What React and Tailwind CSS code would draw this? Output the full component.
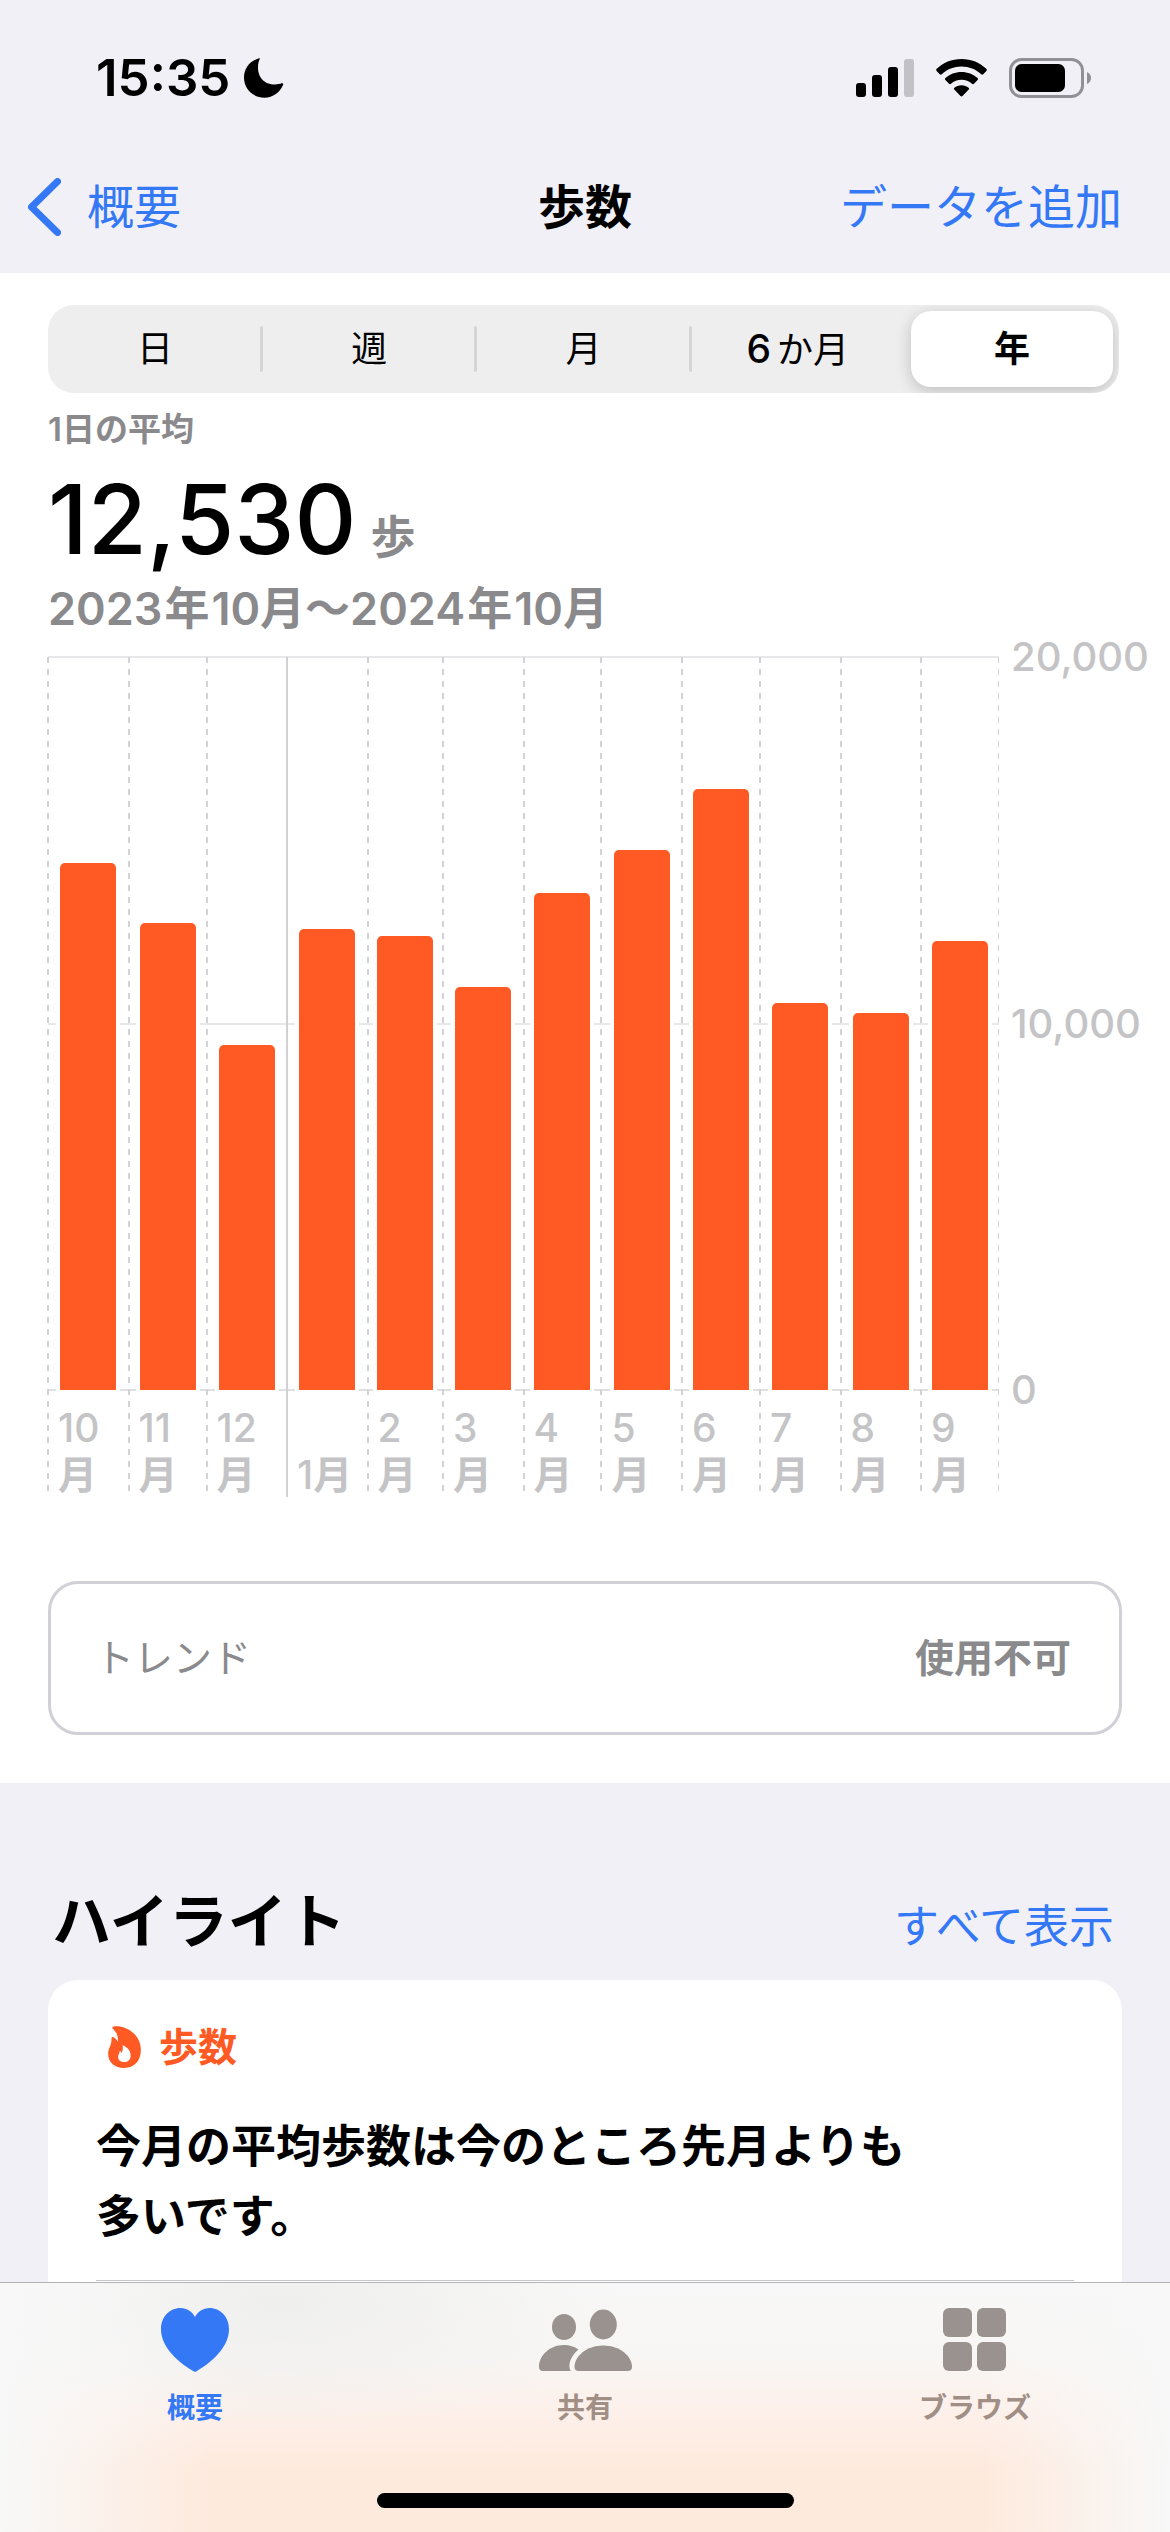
import { useState } from 'react';

const RANGES = ['日', '週', '月', '6か月', '年'];

const MAX_STEPS = 20000;

const MONTHS = [
  { month: 10, days: 31, steps: 14379 },
  { month: 11, days: 30, steps: 12742 },
  { month: 12, days: 31, steps: 9413 },
  { month: 1, days: 31, steps: 12578 },
  { month: 2, days: 29, steps: 12387 },
  { month: 3, days: 31, steps: 10996 },
  { month: 4, days: 30, steps: 13561 },
  { month: 5, days: 31, steps: 14734 },
  { month: 6, days: 30, steps: 16398 },
  { month: 7, days: 31, steps: 10559 },
  { month: 8, days: 31, steps: 10286 },
  { month: 9, days: 30, steps: 12251 },
];

function StatusBar() {
  return (
    <div className="h-[155px] shrink-0 pl-24 pr-[79px] flex items-center justify-between">
      <div className="flex items-center gap-3.5">
        <span className="text-[51px] leading-[56px] font-semibold">15:35</span>
        <svg width="40" height="40" viewBox="0 0 40 40" aria-hidden="true">
          <path d="M15 .3C16 0 16 .8 15.7 1.3C12 8 13 26.5 31 26.5C33.5 26.5 36 26 37.5 25.3C39 24.8 39.6 25.6 39.1 26.8C36 34.5 29 39.7 20.5 39.7C9 39.7 0 30.8 0 19.5C0 10.5 6 2.8 15 .3Z" />
        </svg>
      </div>
      <div className="flex items-center gap-[22px]">
        <svg width="58" height="38" viewBox="0 0 58 38" aria-hidden="true">
          <rect x="0" y="24" width="10" height="14" rx="3" />
          <rect x="16" y="16" width="10" height="22" rx="3" />
          <rect x="32" y="8" width="10" height="30" rx="3" />
          <rect x="48" y="0" width="10" height="38" rx="3" fill="#c2c1c7" />
        </svg>
        <svg width="51" height="38" viewBox="0 0 51 38" aria-hidden="true">
          <path d="M25.500 0C35.300 0 44 3.700 50.300 9.800C51 10.500 51 11.300 50.400 11.900L47.200 15.200C46.600 15.800 45.800 15.800 45.200 15.200C40 10.400 33 7.600 25.500 7.600C18 7.600 11 10.400 5.800 15.200C5.200 15.800 4.400 15.800 3.800 15.200L.6 11.900C0 11.300 0 10.500 .7 9.800C7 3.700 15.700 0 25.500 0Z" />
          <path d="M25.500 13C31.700 13 37.300 15.300 41.500 19.100C42.200 19.800 42.200 20.500 41.600 21.100L38 24.800C37.400 25.400 36.700 25.400 36 24.800C33.200 22.300 29.500 20.800 25.500 20.800C21.500 20.800 17.800 22.300 15 24.800C14.300 25.400 13.600 25.400 13 24.800L9.400 21.100C8.800 20.500 8.800 19.800 9.500 19.100C13.700 15.300 19.300 13 25.500 13Z" />
          <path d="M25.500 26.200C28.300 26.200 30.700 27.100 32.600 28.700C33.300 29.300 33.300 30 32.700 30.600L26.500 37.100C25.900 37.700 25.100 37.700 24.500 37.100L18.300 30.600C17.700 30 17.700 29.300 18.400 28.700C20.300 27.100 22.700 26.200 25.500 26.200Z" />
        </svg>
        <svg width="82" height="40" viewBox="0 0 82 40" aria-hidden="true">
          <rect x="1.500" y="1.500" width="72" height="37" rx="11" fill="none" stroke="#919095" strokeWidth="3" />
          <rect x="6" y="6" width="50" height="28" rx="6.500" />
          <path d="M78 14C80.500 15 82 17 82 20C82 23 80.500 25 78 26Z" fill="#919095" />
        </svg>
      </div>
    </div>
  );
}

function NavBar() {
  return (
    <header className="h-[118px] shrink-0 pb-3.5 px-7 grid grid-cols-[1fr_auto_1fr] items-center text-[47px] leading-[56px]">
      <button type="button" className="flex items-center gap-[26px] text-[#3478f6]">
        <svg width="33" height="58" viewBox="0 0 33 58" fill="none" stroke="currentColor" strokeWidth="7" strokeLinecap="round" strokeLinejoin="round" aria-hidden="true">
          <path d="M29.500 3.500L3.500 29L29.500 54.500" />
        </svg>
        <span>概要</span>
      </button>
      <h1 className="font-bold">歩数</h1>
      <button type="button" className="justify-self-end pr-5 text-[#3478f6]">データを追加</button>
    </header>
  );
}

function RangePicker() {
  const [selected, setSelected] = useState('年');

  return (
    <div className="ml-12 mr-[51px] h-[88px] rounded-[26px] bg-[#eeeeef] grid grid-cols-5 overflow-hidden">
      {RANGES.map((range, i) => {
        const active = range === selected;
        const divider = i > 0 && !active && RANGES[i - 1] !== selected;
        return (
          <div key={range} className="relative p-1.5">
            {divider && <span className="absolute -left-0.5 top-[21px] h-[46px] w-[3px] rounded-full bg-[#d5d5d7]" />}
            <button
              type="button"
              aria-pressed={active}
              onClick={() => setSelected(range)}
              className={
                active
                  ? 'size-full rounded-[20px] bg-white text-4xl font-bold shadow-[0_4px_16px_rgba(0,0,0,0.2)]'
                  : 'size-full rounded-[20px] text-4xl'
              }
            >
              {range === '6か月' ? (
                <>
                  <span className="mr-1.5 text-[39px] font-medium">6</span>か月
                </>
              ) : (
                range
              )}
            </button>
          </div>
        );
      })}
    </div>
  );
}

function MonthColumn({ month, days, steps }) {
  const isJanuary = month === 1;

  return (
    <div className="relative basis-0 min-w-0" style={{ flexGrow: days }}>
      <div className="h-[733px] flex items-end justify-center">
        <div
          className="w-14 rounded-t-[5px] bg-[#ff5a23] ring-4 ring-white"
          style={{ height: `${(steps / MAX_STEPS) * 100}%` }}
        />
      </div>
      {/* the year boundary is solid, the other months are dashed */}
      {isJanuary ? (
        <span className="absolute -left-px top-0 h-[840px] w-0.5 bg-[#d1d1d4]" />
      ) : (
        <span className="absolute -left-px top-0 h-[835px] w-0.5 bg-[repeating-linear-gradient(to_bottom,#d3d3d5_0_6px,transparent_6px_12px)]" />
      )}
      <div className="h-[108px] pt-3.5 pl-2.5 text-[39px] leading-[47px] font-medium text-[#c4c4c6] whitespace-nowrap">
        {isJanuary ? <br /> : null}
        {month}
        {isJanuary ? null : <br />}
        <span className="font-bold">月</span>
      </div>
    </div>
  );
}

function StepsChart() {
  return (
    <div className="mt-5 pl-12 flex">
      <div className="relative flex-1 flex">
        <div className="absolute inset-x-0 -top-px h-[735px] flex flex-col justify-between">
          <span className="h-0.5 bg-[#e8e8ea]" />
          <span className="h-0.5 bg-[#e8e8ea]" />
          <span className="h-0.5 bg-[#e0e0e2]" />
        </div>
        {MONTHS.map((m) => (
          <MonthColumn key={m.month} {...m} />
        ))}
        <span className="absolute right-0 top-0 h-[835px] w-px bg-[repeating-linear-gradient(to_bottom,#d3d3d5_0_6px,transparent_6px_12px)]" />
      </div>
      <div className="w-[171px] h-[781px] -mt-6 pl-3 flex flex-col justify-between text-[40px] leading-[48px] font-medium text-[#c4c4c6]">
        <span>20,000</span>
        <span>10,000</span>
        <span>0</span>
      </div>
    </div>
  );
}

function Highlights() {
  return (
    <section className="flex-1 flex flex-col pt-[99px]">
      <div className="pl-13 pr-14 pb-[18px] flex items-baseline justify-between">
        <h2 className="text-[59px] leading-[80px] font-bold">ハイライト</h2>
        <a href="#all" className="text-[45px] leading-[56px] text-[#3478f6]">すべて表示</a>
      </div>
      <article className="flex-1 mx-12 px-12 pt-[43px] rounded-t-[30px] bg-white">
        <div className="pl-3 flex items-center gap-[18px] text-[#ff5a23]">
          <svg width="33" height="42" viewBox="0 0 32 41" fill="currentColor" fillRule="evenodd" aria-hidden="true">
            <path d="M5 .6C14 -1.500 32 6 32 23.500C32 34 25.500 41 15.800 41C6.500 41 0 35.500 0 27C0 21.500 3.500 19.500 3.300 12.500C3.200 10.500 4.500 10.300 5.800 11.200C7.300 12.200 8.500 13.500 9.600 15.300C9.800 9.500 8.500 6.500 4.800 3C3.800 2 4 .9 5 .6ZM14.800 19C14.300 18.700 14 19 14.200 19.600C14.800 22.500 14 24 13.300 26.500C13 25.700 12.500 24.800 11.800 24.400C11.300 24.200 11.200 24.500 11.200 25C11.200 27 9.800 28 9.800 30.200C9.800 33.300 12.300 35.200 15.800 35.200C19.700 35.200 22 32.500 22 28.700C22 24 18.800 20.800 14.800 19Z" />
          </svg>
          <h3 className="text-[39px] leading-[48px] font-bold">歩数</h3>
        </div>
        <p className="mt-[41px] text-[45px] leading-[70px] font-bold">
          今月の平均歩数は今のところ先月よりも
          <br />
          多いです。
        </p>
        <hr className="mt-7 border-t border-[#c6c6c8]" />
      </article>
    </section>
  );
}

function TabBar() {
  return (
    <nav className="shrink-0 border-t border-[#b4b2b6] bg-[#f8f8f8] bg-[linear-gradient(to_right,#f8f8f8,#f8f8f800_18%,#f8f8f800_84%,#f8f8f8),radial-gradient(ellipse_340px_130px_at_24%_8%,#efefee,#efefee00),linear-gradient(to_bottom,#f8f8f8,#f8f6f4_30%,#fdf0ea_52%,#feeadd_75%)] pt-[25px] pb-6">
      <div className="grid grid-cols-3 text-[28px] leading-9 font-bold">
        <button type="button" aria-current="page" className="flex flex-col items-center gap-[18px] text-[#3478f6]">
          <svg width="68" height="64" viewBox="0 0 68 64" fill="currentColor" aria-hidden="true">
            <path d="M34 9C31 3.500 26 0 19.500 0C8.500 0 0 9 0 21C0 37 13 51.500 32.500 63.300C33.500 64 34.500 64 35.500 63.300C55 51.500 68 37 68 21C68 9 59.500 0 48.500 0C42 0 37 3.500 34 9Z" />
          </svg>
          概要
        </button>
        <button type="button" className="flex flex-col items-center gap-[18px] text-[#a18f86]">
          <svg width="95" height="64" viewBox="12 12 95 64" fill="#99928e" aria-hidden="true">
            <ellipse cx="38" cy="31" rx="12" ry="13" />
            <path d="M38 49C43.500 49 48.500 50.500 52.500 53.500C46 59 43 65.500 43.500 71C43.600 72.500 44 74 45 75L17 75C14.500 75 13 73.500 13 71C13 60 23 49 38 49Z" />
            <ellipse cx="77.300" cy="28.500" rx="13.500" ry="15" />
            <path d="M77.300 49.500C94 49.500 106 60.500 106 71C106 73.500 104.500 75 102 75L52.500 75C50 75 48.500 73.500 48.500 71C48.500 60.500 60.500 49.500 77.300 49.500Z" />
          </svg>
          共有
        </button>
        <button type="button" className="flex flex-col items-center gap-[18px] text-[#a18f86]">
          <svg width="64" height="64" viewBox="0 0 64 64" fill="#99928e" aria-hidden="true">
            <rect x="0" y="0" width="29" height="29" rx="6" />
            <rect x="34" y="0" width="29" height="29" rx="6" />
            <rect x="0" y="34" width="29" height="29" rx="6" />
            <rect x="34" y="34" width="29" height="29" rx="6" />
          </svg>
          ブラウズ
        </button>
      </div>
      <div className="mx-auto mt-[67px] h-[15px] w-[417px] rounded-full bg-black" />
    </nav>
  );
}

export default function App() {
  return (
    <div lang="ja" className="h-screen flex flex-col bg-[#f1f0f6] text-black font-['Inter','Noto_Sans_CJK_JP',sans-serif]">
      <StatusBar />
      <NavBar />
      <main className="flex-1 min-h-0 flex flex-col overflow-y-auto [scrollbar-width:none]">
        <section className="bg-white pt-8 pb-12">
          <RangePicker />
          <div className="px-12 text-[#8a8a8d] font-semibold">
            <p className="mt-3 text-[33px] leading-[48px]">1日の平均</p>
            <p className="mt-[18px] flex items-baseline gap-3.5">
              <span className="text-8xl leading-[96px] font-medium text-black">12,530</span>
              <span className="text-[45px] leading-[48px]">歩</span>
            </p>
            <p className="mt-3.5 text-[45px] leading-[56px]">
              2023<span className="mx-0.5">年</span>10月〜2024<span className="mx-0.5">年</span>10月
            </p>
          </div>
          <StepsChart />
          <div className="mx-12 mt-[83px] h-[154px] pl-11 pr-12 flex items-center justify-between rounded-[30px] border-3 border-[#d0d0d6] text-[39px] leading-[48px] text-[#8a8a8d]">
            <span>トレンド</span>
            <span className="font-bold">使用不可</span>
          </div>
        </section>
        <Highlights />
      </main>
      <TabBar />
    </div>
  );
}
